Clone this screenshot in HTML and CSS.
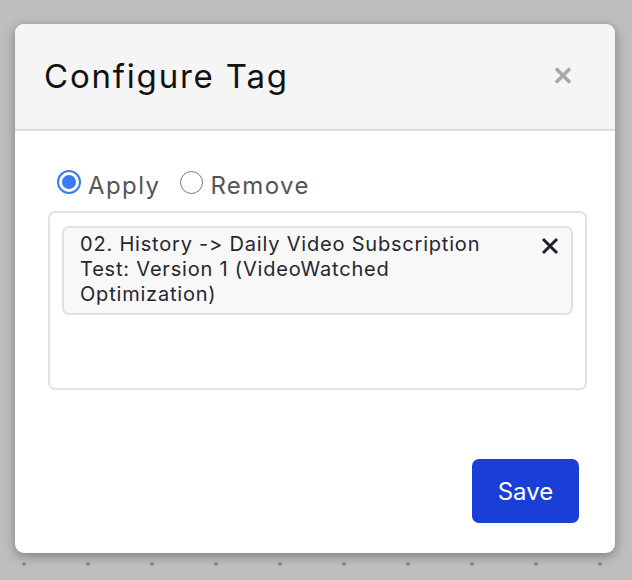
FILE: index.html
```html
<!DOCTYPE html>
<html>
<head>
<meta charset="utf-8">
<link rel="stylesheet" href="styles.css">
</head>
<body>
<div class="dialog">
  <div class="header">
    <h1 class="title">Configure Tag</h1>
    <button class="close" aria-label="Close">
      <svg width="20" height="19" viewBox="0 0 20 19"><path d="M3 2.5 L17 16.5 M17 2.5 L3 16.5" stroke="#a9a9a9" stroke-width="3.6" stroke-linecap="butt"/></svg>
    </button>
  </div>
  <div class="content">
    <div class="radios">
      <label class="radio"><span class="dot on"></span><span class="rlabel">Apply</span></label>
      <label class="radio"><span class="dot"></span><span class="rlabel">Remove</span></label>
    </div>
    <div class="box">
      <div class="chip">
        <span class="chip-text">02. History -&gt; Daily Video Subscription Test: Version 1 (VideoWatched Optimization)</span>
        <svg class="chip-x" width="18" height="18" viewBox="0 0 18 18"><path d="M2 2 L16 16 M16 2 L2 16" stroke="#22222e" stroke-width="3"/></svg>
      </div>
    </div>
  </div>
  <div class="footer">
    <button class="save">Save</button>
  </div>
</div>
</body>
</html>
```

FILE: styles.css
```css
html, body {
  margin: 0;
  padding: 0;
}
body {
  width: 632px;
  height: 580px;
  background-color: #bebebe;
  background-image: radial-gradient(circle, #8e8e8e 1.6px, transparent 2px);
  background-size: 64px 6px;
  background-repeat: repeat-x;
  background-position: -8px 561px;
  font-family: "Inter", "Liberation Sans", sans-serif;
  font-feature-settings: "calt" 0, "liga" 0;
  overflow: hidden;
  padding-top: 24px;
  box-sizing: border-box;
}
.dialog {
  margin-left: 15px;
  width: 600px;
  height: 529px;
  background: #fff;
  border-radius: 9px;
  box-shadow: 0 3px 12px rgba(0, 0, 0, 0.35);
  overflow: hidden;
  display: flex;
  flex-direction: column;
}
.header {
  height: 105px;
  background: #f5f5f5;
  border-bottom: 2px solid #dedede;
  display: flex;
  align-items: center;
  justify-content: space-between;
  padding: 0 42px 0 29px;
  flex-shrink: 0;
}
.title {
  margin: 0 0 2px 0;
  font-size: 33px;
  font-weight: 400;
  letter-spacing: 1.8px;
  color: #111;
}
.close {
  border: 0;
  background: none;
  padding: 0;
  width: 20px;
  height: 19px;
  display: flex;
  margin-bottom: 2px;
}
.content {
  padding: 39px 28px 0 33px;
}
.radios {
  display: flex;
  align-items: center;
  padding-left: 9px;
  height: 24px;
}
.radio {
  display: flex;
  align-items: center;
  gap: 7px;
  margin-right: 20px;
}
.dot {
  width: 21px;
  height: 21px;
  border: 1.8px solid #777;
  border-radius: 50%;
  box-sizing: content-box;
  position: relative;
  background: #fff;
  flex-shrink: 0;
}
.dot.on {
  width: 20px;
  height: 20px;
  border: 2.5px solid #3a7bf3;
}
.dot.on::after {
  content: "";
  position: absolute;
  left: 3px;
  top: 3px;
  width: 14px;
  height: 14px;
  border-radius: 50%;
  background: #3a7bf3;
}
.rlabel {
  font-size: 24px;
  letter-spacing: 1.4px;
  color: #555;
  margin-top: 6px;
}
.box {
  margin-top: 17px;
  height: 179px;
  border: 2px solid #e2e2e4;
  border-radius: 7px;
  box-sizing: border-box;
  padding: 13px 12px 0 12px;
}
.chip {
  height: 89px;
  box-sizing: border-box;
  background: #f8f8f9;
  border: 2px solid #e1e1e3;
  border-radius: 7px;
  display: flex;
  align-items: flex-start;
  justify-content: space-between;
  padding: 4px 12px 0 16px;
}
.chip-text {
  font-size: 20px;
  line-height: 25px;
  letter-spacing: 0.8px;
  color: #262630;
  width: 440px;
}
.chip-x {
  margin-top: 5px;
  flex-shrink: 0;
}
.footer {
  margin-top: auto;
  display: flex;
  justify-content: flex-end;
  padding: 0 36px 30px 0;
}
.save {
  width: 107px;
  height: 64px;
  border: 0;
  border-radius: 7px;
  background: #1a3fd7;
  color: #fff;
  font-family: "Inter", "Liberation Sans", sans-serif;
  font-size: 24px;
  padding: 0;
}
```
